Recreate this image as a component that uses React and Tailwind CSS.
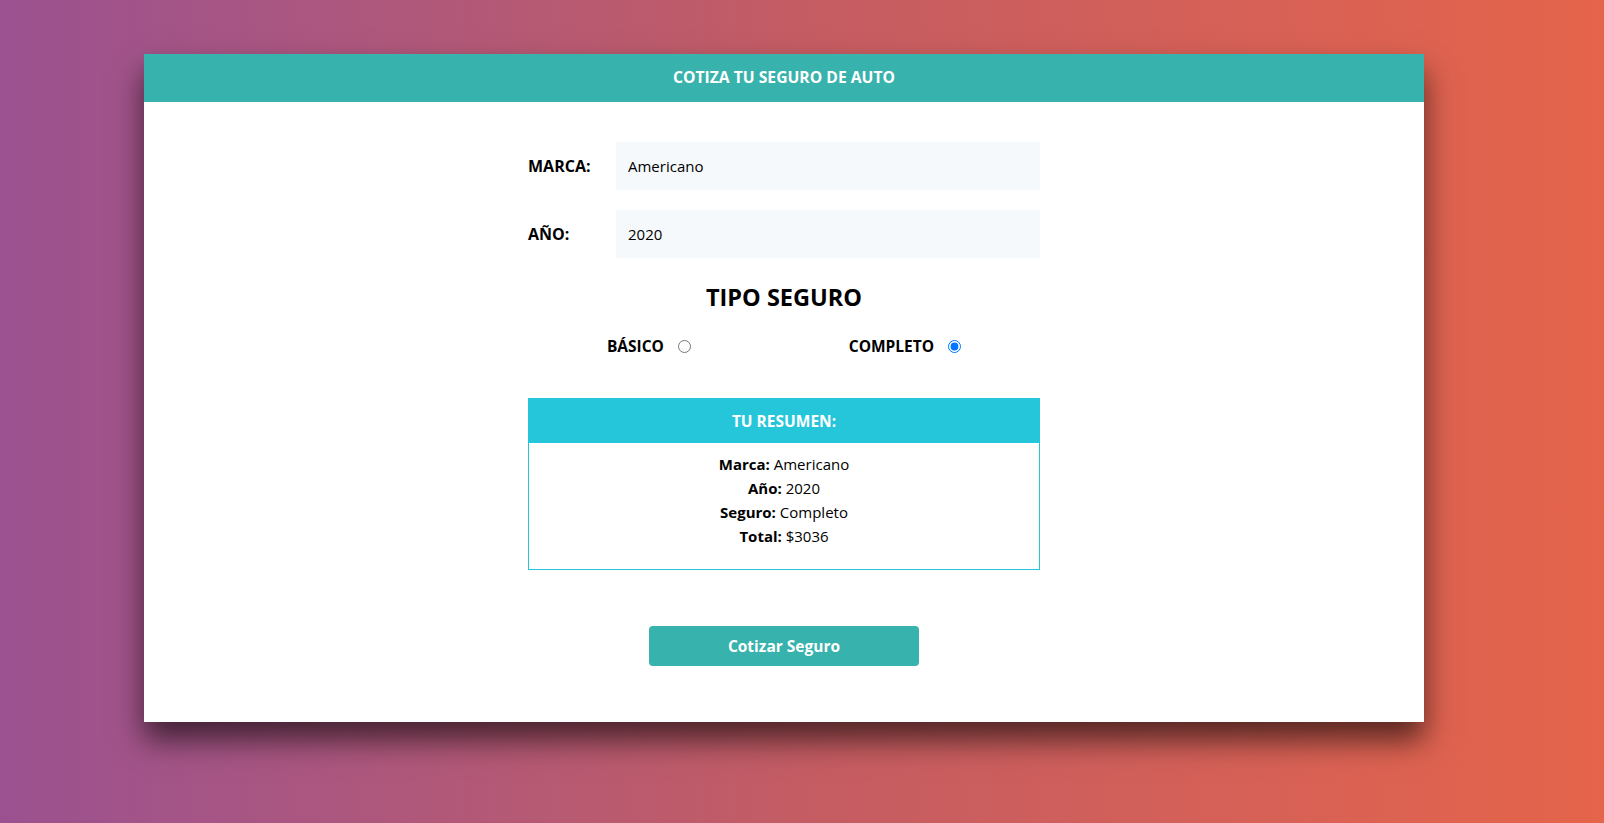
import { useState } from "react";

const font = "font-['Open_Sans',sans-serif]";

export default function App() {
  const [marca, setMarca] = useState("Americano");
  const [year, setYear] = useState("2020");
  const [plan, setPlan] = useState("completo");

  return (
    <div className={`min-h-screen w-full bg-gradient-to-r from-[#9b5190] via-[#c45c63] to-[#e5644a] pt-[54px] pl-[144px] pb-[100px] ${font}`}>
      <div className="w-[1280px] bg-white shadow-[0_18px_28px_rgba(0,0,0,0.6)]">
        <header className="h-12 bg-[#38b2ac] flex items-center justify-center">
          <h1 className="text-[15.7px] font-bold text-white">COTIZA TU SEGURO DE AUTO</h1>
        </header>

        <div className="w-[512px] mx-auto pt-10 pb-14">
          <div className="flex items-center">
            <label className="w-[88px] text-[16px] font-bold text-black">MARCA:</label>
            <input
              value={marca}
              onChange={(e) => setMarca(e.target.value)}
              className="h-12 w-[424px] bg-[#f6f9fc] px-3 text-[15px] text-black outline-none"
            />
          </div>
          <div className="flex items-center mt-5">
            <label className="w-[88px] text-[16px] font-bold text-black">AÑO:</label>
            <input
              value={year}
              onChange={(e) => setYear(e.target.value)}
              className="h-12 w-[424px] bg-[#f6f9fc] px-3 text-[15px] text-black outline-none"
            />
          </div>

          <h2 className="mt-[23px] text-center text-[23.5px] leading-8 font-bold text-black">TIPO SEGURO</h2>

          <div className="mt-[22px] flex justify-around items-center">
            <label className="flex items-center text-[15.5px] font-bold text-black">
              BÁSICO
              <input
                type="radio"
                name="plan"
                checked={plan === "basico"}
                onChange={() => setPlan("basico")}
                className="ml-3.5 h-[13px] w-[13px]"
              />
            </label>
            <label className="flex items-center text-[15.5px] font-bold text-black">
              COMPLETO
              <input
                type="radio"
                name="plan"
                checked={plan === "completo"}
                onChange={() => setPlan("completo")}
                className="ml-3.5 h-[13px] w-[13px]"
              />
            </label>
          </div>

          <div className="mt-10 border border-[#26c6da]">
            <div className="h-11 bg-[#26c6da] flex items-center justify-center">
              <p className="text-[15.5px] font-bold text-white">TU RESUMEN:</p>
            </div>
            <div className="pt-[9px] pb-[21px] text-center text-[15px] leading-6 text-black">
              <p><span className="font-bold">Marca:</span> {marca}</p>
              <p><span className="font-bold">Año:</span> {year}</p>
              <p><span className="font-bold">Seguro:</span> {plan === "completo" ? "Completo" : "Básico"}</p>
              <p><span className="font-bold">Total:</span> $3036</p>
            </div>
          </div>

          <div className="mt-14 flex justify-center">
            <button className="h-10 w-[270px] rounded bg-[#38b2ac] text-[15.5px] font-bold text-white">
              Cotizar Seguro
            </button>
          </div>
        </div>
      </div>
    </div>
  );
}
